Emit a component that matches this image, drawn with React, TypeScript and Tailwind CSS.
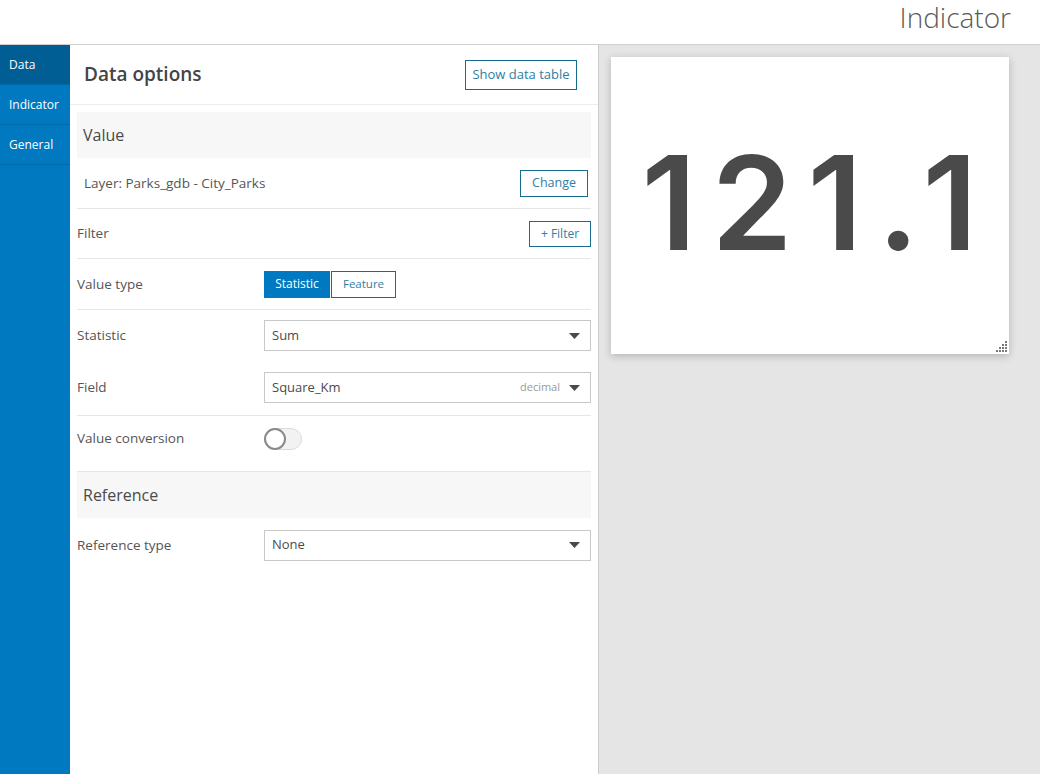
import React from "react";

const font = { fontFamily: "'Open Sans', 'Noto Sans', sans-serif" };

function Caret() {
  return (
    <svg width="11" height="6" viewBox="0 0 11 6" className="shrink-0">
      <path d="M0 0 H11 L5.5 6 Z" fill="#4a4a4a" />
    </svg>
  );
}

function Select({ value, hint }: { value: string; hint?: string }) {
  return (
    <div className="flex h-[31px] flex-1 items-center border border-[#c8c8c8] bg-white pl-[7px] pr-[10px]">
      <span className="flex-1 text-[13px] text-[#4a4a4a]">{value}</span>
      {hint && <span className="mr-[9px] text-[11px] text-[#9a9a9a]">{hint}</span>}
      <Caret />
    </div>
  );
}

function Grip() {
  const dots: [number, number][] = [
    [9, 0],
    [6, 3],
    [9, 3],
    [3, 6],
    [6, 6],
    [9, 6],
    [0, 9],
    [3, 9],
    [6, 9],
    [9, 9],
  ];
  return (
    <svg width="11" height="11" viewBox="0 0 11 11" className="absolute bottom-[2px] right-[2px]">
      {dots.map(([x, y], i) => (
        <rect key={i} x={x} y={y} width="2" height="2" fill="#777" />
      ))}
    </svg>
  );
}

const label = "w-[187px] text-[13.5px] text-[#555]";

export default function App() {
  return (
    <div className="flex h-[774px] w-[1040px] flex-col bg-white" style={font}>
      <header className="flex h-[45px] shrink-0 items-center justify-end border-b border-[#cfcfcf] pb-[10px] pr-[29px]">
        <span className="text-[28px] font-light leading-none text-[#5a5a5a]">Indicator</span>
      </header>
      <div className="flex flex-1">
        <nav className="w-[70px] shrink-0 bg-[#0079c1]">
          <div className="flex h-[40px] items-center border-b border-[#006aa9] bg-[#005e95] pl-[9px] text-[12px] text-white">
            Data
          </div>
          <div className="flex h-[40px] items-center border-b border-[#006aa9] pl-[9px] text-[12px] text-white">
            Indicator
          </div>
          <div className="flex h-[40px] items-center border-b border-[#006aa9] pl-[9px] text-[12px] text-white">
            General
          </div>
        </nav>
        <main className="w-[529px] shrink-0 border-r border-[#cccccc] bg-white">
          <div className="flex h-[60px] items-center justify-between border-b border-[#ececec] pl-[14px] pr-[21px]">
            <span className="text-[19px] font-semibold text-[#444]">Data options</span>
            <button className="h-[30px] w-[112px] border border-[#146d8f] bg-white text-[13px] text-[#2f7ea3]">
              Show data table
            </button>
          </div>
          <div className="px-[7px] pt-[7px]">
            <div className="flex h-[46px] items-center bg-[#f7f7f7] pl-[6px] text-[16px] text-[#4a4a4a]">
              Value
            </div>
            <div className="flex h-[51px] items-center justify-between border-b border-[#e6e6e6] pl-[7px] pr-[3px]">
              <span className="text-[13.5px] text-[#555]">Layer: Parks_gdb - City_Parks</span>
              <button className="h-[27px] w-[68px] border border-[#146d8f] bg-white text-[12.5px] text-[#2f7ea3]">
                Change
              </button>
            </div>
            <div className="flex h-[50px] items-center justify-between border-b border-[#e6e6e6]">
              <span className="text-[13.5px] text-[#555]">Filter</span>
              <button className="h-[26px] w-[62px] border border-[#146d8f] bg-white text-[12px] text-[#2f7ea3]">
                + Filter
              </button>
            </div>
            <div className="flex h-[51px] items-center border-b border-[#e6e6e6]">
              <span className={label}>Value type</span>
              <div className="flex">
                <button className="h-[27px] w-[66px] bg-[#0079c1] text-[12px] text-white">Statistic</button>
                <button className="ml-px h-[27px] w-[65px] border border-[#146d8f] bg-white text-[11.5px] text-[#2f7ea3]">
                  Feature
                </button>
              </div>
            </div>
            <div className="flex h-[52px] items-center pb-[1px]">
              <span className={label}>Statistic</span>
              <Select value="Sum" />
            </div>
            <div className="flex h-[54px] items-center border-b border-[#e6e6e6] pb-[2px]">
              <span className={label}>Field</span>
              <Select value="Square_Km" hint="decimal" />
            </div>
            <div className="flex h-[56px] items-center border-b border-[#e6e6e6] pb-[10px]">
              <span className={label}>Value conversion</span>
              <div className="relative h-[22px] w-[38px] rounded-full border border-[#dcdcdc] bg-[#f2f2f2]">
                <div className="absolute left-[-1px] top-[-1px] h-[22px] w-[22px] rounded-full border-2 border-[#8a8a8a] bg-white" />
              </div>
            </div>
            <div className="flex h-[46px] items-center bg-[#f7f7f7] pl-[6px] text-[16px] text-[#4a4a4a]">
              Reference
            </div>
            <div className="flex h-[54px] items-center">
              <span className={label}>Reference type</span>
              <Select value="None" />
            </div>
          </div>
        </main>
        <section className="flex-1 bg-[#e5e5e5] p-[12px]">
          <div className="relative flex h-[297px] w-[398px] items-center justify-center bg-white pb-[6px] shadow-[0_2px_8px_rgba(0,0,0,0.22)]">
            <span
              className="pl-[14px] text-[130px] font-semibold leading-none tracking-[15px] text-[#4a4a4a]"
              style={{ fontFamily: "Inter, sans-serif" }}
            >
              121.1
            </span>
            <Grip />
          </div>
        </section>
      </div>
    </div>
  );
}
